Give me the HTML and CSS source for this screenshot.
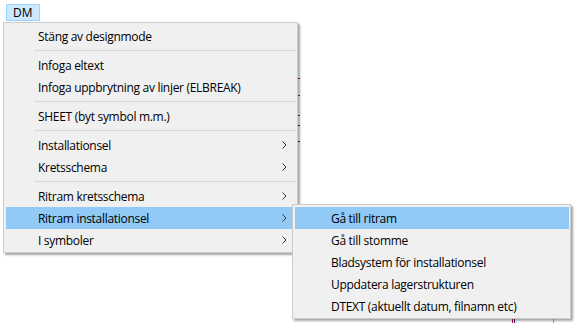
FILE: index.html
```html
<!DOCTYPE html>
<html lang="sv">

<head>
    <meta charset="UTF-8">
    <title>DM</title>
    <link rel="stylesheet" href="styles.css">
</head>

<body>
    <!-- drawing behind the menus -->
    <div class="drawing">
        <div class="line v red" style="left: 512px; top: 316px; height: 10px;"></div>
        <div class="line v blue" style="left: 514px; top: 316px; height: 10px;"></div>
        <div class="line v grey" style="left: 553px; top: 316px; height: 10px;"></div>
        <div class="line h red" style="left: 290px; top: 78px;"></div>
        <div class="line h magenta" style="left: 290px; top: 95px;"></div>
        <div class="line h magenta" style="left: 290px; top: 115px;"></div>
        <div class="line h blue" style="left: 290px; top: 125px;"></div>
        <div class="line h blue" style="left: 290px; top: 141px;"></div>
    </div>

    <div class="menubar">
        <div class="menubar-item active">DM
            <div class="menu main-menu">
                <div class="item">Stäng av designmode</div>
                <div class="separator"></div>
                <div class="item">Infoga eltext</div>
                <div class="item">Infoga uppbrytning av linjer (ELBREAK)</div>
                <div class="separator"></div>
                <div class="item">SHEET (byt symbol m.m.)</div>
                <div class="separator"></div>
                <div class="item has-sub">Installationsel<svg class="arrow" width="5" height="8" viewBox="0 0 5 8"><path d="M0.5 0.5 L4 4 L0.5 7.5" /></svg></div>
                <div class="item has-sub">Kretsschema<svg class="arrow" width="5" height="8" viewBox="0 0 5 8"><path d="M0.5 0.5 L4 4 L0.5 7.5" /></svg></div>
                <div class="separator"></div>
                <div class="item has-sub">Ritram kretsschema<svg class="arrow" width="5" height="8" viewBox="0 0 5 8"><path d="M0.5 0.5 L4 4 L0.5 7.5" /></svg></div>
                <div class="item has-sub selected">Ritram installationsel<svg class="arrow" width="5" height="8" viewBox="0 0 5 8"><path d="M0.5 0.5 L4 4 L0.5 7.5" /></svg>
                    <div class="menu sub-menu">
                        <div class="item selected">Gå till ritram</div>
                        <div class="item">Gå till stomme</div>
                        <div class="item">Bladsystem för installationsel</div>
                        <div class="item">Uppdatera lagerstrukturen</div>
                        <div class="item">DTEXT (aktuellt datum, filnamn etc)</div>
                    </div>
                </div>
                <div class="item has-sub">I symboler<svg class="arrow" width="5" height="8" viewBox="0 0 5 8"><path d="M0.5 0.5 L4 4 L0.5 7.5" /></svg></div>
            </div>
        </div>
    </div>
</body>

</html>
```

FILE: styles.css
```css
html {
    font-family: "Open Sans", "Noto Sans", sans-serif;
    font-size: 12px;
    color: #000000;
    background-color: #ffffff;
}

body {
    margin: 0;
    width: 576px;
    height: 323px;
    overflow: hidden;
    position: relative;
}

.drawing .line {
    position: absolute;
}

.line.v {
    width: 1px;
}

.line.h {
    width: 10px;
    height: 1px;
}

.red {
    background-color: #d01010;
}

.blue {
    background-color: #1020a0;
}

.magenta {
    background-color: #a020a0;
}

.grey {
    background-color: #a0a0a0;
}

.menubar {
    display: flex;
    padding: 4px 0 0 6px;
}

.menubar-item {
    position: relative;
    height: 15px;
    line-height: 15px;
    padding: 0 6px;
    border: 1px solid transparent;
}

.menubar-item.active {
    background-color: #cce8ff;
    border-color: #99d1ff;
}

.menu {
    position: absolute;
    background-color: #f0f0f0;
    border: 1px solid #cccccc;
    box-shadow: 2px 2px 2px rgba(0, 0, 0, 0.35);
    padding: 2px 1px 1px 2px;
    white-space: nowrap;
}

.main-menu {
    left: -4px;
    top: 17px;
    width: 290px;
}

.item {
    position: relative;
    display: flex;
    align-items: center;
    height: 22px;
    padding-left: 32px;
    letter-spacing: -0.3px;
}

.item.selected {
    background-color: #91c9f7;
}

.arrow {
    margin-left: auto;
    margin-right: 9px;
    fill: none;
    stroke: #333333;
    stroke-width: 1;
}

.separator {
    height: 7px;
    margin-left: 28px;
    background: linear-gradient(#d7d7d7, #d7d7d7) no-repeat 0 3px / 100% 1px;
}

.sub-menu {
    left: 286px;
    top: -3px;
    width: 274px;
    z-index: 2;
}

.sub-menu .item {
    padding-left: 36px;
}
```
